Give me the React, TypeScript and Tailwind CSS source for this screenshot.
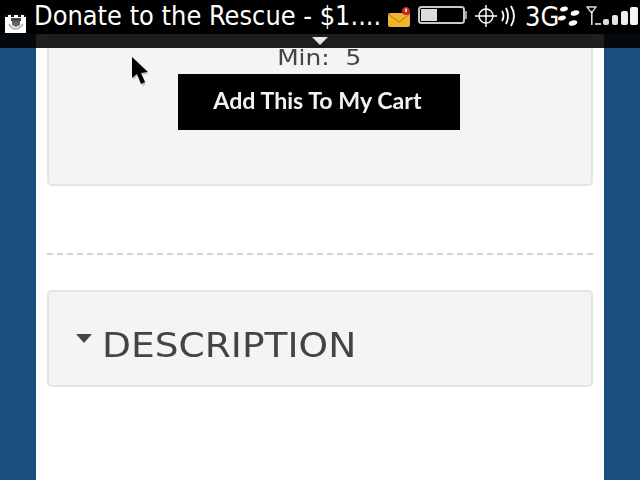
export default function App() {
  const font = { fontFamily: '"DejaVu Sans", sans-serif' };
  return (
    <div className="relative w-[640px] h-[480px] overflow-hidden bg-white flex flex-col font-['DejaVu_Sans',sans-serif]">
      <header className="h-[34px] shrink-0 bg-black flex items-center text-white relative">
        <svg width="21" height="19" viewBox="0 0 21 19" className="ml-[5px] mt-[12px] shrink-0">
          <rect width="21" height="19" fill="#fff" />
          <path d="M0 0 H21 V3 H19 V1 H16 V3 H13 V1 H9 V3 H6 V1 H3 V3 H0 Z" fill="#111" />
          <rect x="6" y="4" width="10" height="3" fill="#444" />
          <path d="M7 7 H15 V11 L11 13 L7 11 Z" fill="#666" />
          <path d="M4 10 Q10 20 18 10" stroke="#b5a99c" strokeWidth="1.5" fill="none" />
        </svg>
        <span className="ml-[8px] text-[26.9px] leading-none whitespace-nowrap mt-[-1px] w-[346px] shrink-0 font-['DejaVu_Sans_Condensed','DejaVu_Sans',sans-serif] [font-stretch:condensed]">Donate to the Rescue - $1....</span>
        <svg width="24" height="20" viewBox="0 0 24 20" className="ml-[7px] mt-[-1px] shrink-0">
          <rect x="1" y="6" width="22" height="14" rx="2" fill="#f0b429" />
          <path d="M1 7 L12 15 L23 7" stroke="#a87513" strokeWidth="1" fill="none" />
          <circle cx="19" cy="4" r="4" fill="#c22" />
          <rect x="18.2" y="1.5" width="1.6" height="3.5" fill="#fff" />
        </svg>
        <svg width="50" height="19" viewBox="0 0 50 19" className="ml-[7px] mt-[-3px] shrink-0">
          <rect x="1" y="1" width="45" height="16" rx="2.5" fill="#000" stroke="#c8c8c8" strokeWidth="2" />
          <rect x="3" y="3" width="16" height="12" fill="#dcdcdc" />
          <rect x="47" y="5" width="2" height="8" fill="#999" />
        </svg>
        <svg width="42" height="24" viewBox="0 0 42 24" fill="none" stroke="#fff" className="ml-[7px] mt-[-2px] shrink-0">
          <circle cx="11" cy="12" r="7" strokeWidth="1.4" />
          <path d="M11 1 V23 M0 12 H22" strokeWidth="1.4" />
          <path d="M27 7 Q30 12 27 17 M31 4 Q35 12 31 20 M36 2 Q42 12 36 22" strokeWidth="1.8" />
        </svg>
        <span className="ml-[8px] text-[27px] leading-none shrink-0 mt-[-1px] w-[33px] whitespace-nowrap font-['DejaVu_Sans_Condensed','DejaVu_Sans',sans-serif] [font-stretch:condensed]">3G</span>
        <svg width="24" height="22" viewBox="0 0 24 22" fill="#fff" className="ml-[0px] mt-[-2px] shrink-0">
          <ellipse cx="6" cy="4" rx="4" ry="2.3" transform="rotate(-15 6 4)" />
          <ellipse cx="4" cy="13" rx="4" ry="2.3" transform="rotate(-15 4 13)" />
          <ellipse cx="17" cy="8" rx="4.4" ry="2.5" transform="rotate(-15 17 8)" />
          <ellipse cx="15" cy="18" rx="4.4" ry="2.5" transform="rotate(-15 15 18)" />
        </svg>
        <svg width="52" height="26" viewBox="0 0 52 26" className="ml-[4px] mt-[-6px] shrink-0">
          <path d="M1 6 H10 L5.5 12 Z" fill="none" stroke="#ddd" strokeWidth="1.3" />
          <rect x="5" y="10" width="1.6" height="14" fill="#ddd" />
          <rect x="9" y="22" width="6" height="2" fill="#bbb" />
          <rect x="17" y="18" width="6" height="6" rx="2" fill="#ddd" />
          <rect x="26" y="14" width="6" height="10" rx="2" fill="#e5e5e5" />
          <rect x="35" y="10" width="7" height="14" rx="2" fill="#eee" />
          <rect x="44" y="6" width="8" height="18" rx="2" fill="#f5f5f5" />
        </svg>
      </header>

      <div className="flex-1 flex bg-white" style={font}>
        <div className="w-[36px] shrink-0 bg-[#1b4d7e]" />
        <main className="w-[568px] shrink-0 px-[11px]">
          <section className="h-[152px] rounded-b-[5px] border-2 border-t-0 border-[#e4e5ea] bg-[#f3f4f6] flex flex-col items-center">
            <p className="mt-[11px] mr-[2px] text-[22px] leading-[26px] text-[#444] whitespace-pre scale-x-[1.13]">Min:  5</p>
            <button className="mt-[3px] mr-[2px] w-[282px] h-[56px] bg-black text-[#f1f1f1] text-[23.2px] font-bold font-['Lato',sans-serif] flex items-center justify-center">
              <span className="blur-[0.5px] mt-[-3px] mr-[3px]">Add This To My Cart</span>
            </button>
          </section>
          <hr className="mt-[67px] border-0 border-t-2 border-dashed border-[#d4d4d4]" />
          <section className="mt-[35px] h-[97px] rounded-[5px] border-2 border-[#e4e5ea] bg-[#f3f4f6] flex items-center pl-[27px]">
            <span className="w-0 h-0 mt-[-1px] border-x-[8px] border-x-transparent border-t-[9px] border-t-[#444]" />
            <h2 className="ml-[10px] text-[34px] leading-none font-normal text-[#444] mt-[13px] scale-x-[1.105] origin-left">DESCRIPTION</h2>
          </section>
        </main>
        <div className="w-[36px] shrink-0 bg-[#1b4d7e]" />
      </div>

      <div className="absolute left-0 right-0 top-[34px] h-[14px] bg-[#000000e0] flex justify-center">
        <span className="mt-[3px] w-0 h-0 border-x-[8px] border-x-transparent border-t-[8px] border-t-[#e8e8e8]" />
      </div>
      <svg width="20" height="32" viewBox="0 0 20 32" className="absolute left-[131px] top-[56px]">
        <path d="M2 3 V24 L7 20 L11 30 L15 28 L11 19 L18 18 Z" fill="#00000030" />
        <path d="M1 1 V22 L6 18 L10 28 L14 26 L10 17 L17 16 Z" fill="#000" />
      </svg>
    </div>
  );
}
